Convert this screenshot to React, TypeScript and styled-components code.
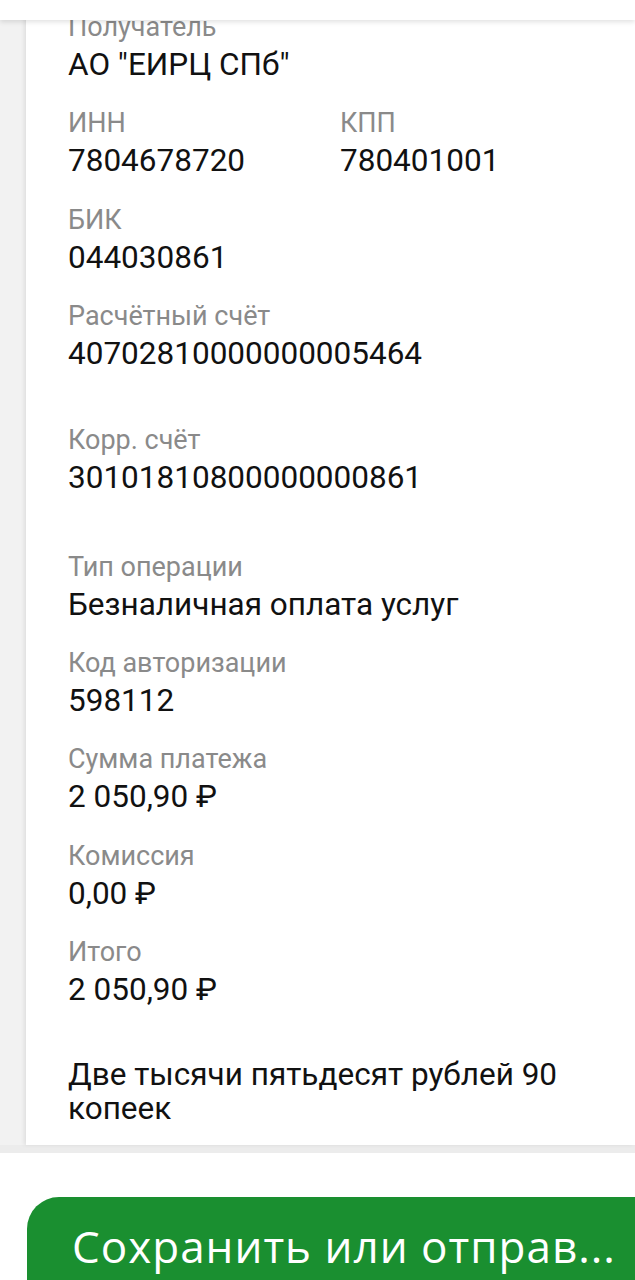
import React from "react";
import styled, { createGlobalStyle } from "styled-components";

const Global = createGlobalStyle`
  html, body { margin: 0; padding: 0; background: #ffffff; }
  body { font-family: Roboto, "Noto Sans", Arial, sans-serif; overflow: hidden; }
`;

const Screen = styled.div`
  position: relative;
  width: 635px;
  height: 1280px;
  overflow: hidden;
  background: #ffffff;
  display: flex;
  flex-direction: column;
`;

const TopBar = styled.div`
  position: absolute;
  top: 0;
  left: 0;
  right: 0;
  height: 20px;
  background: #ffffff;
  box-shadow: 0 2px 5px rgba(0, 0, 0, 0.12);
  z-index: 2;
`;

const Body = styled.div`
  display: flex;
  background: #f2f2f2;
  box-shadow: 0 4px 4px rgba(0, 0, 0, 0.08);
  border-bottom: 8px solid #ececec;
`;

const SideStrip = styled.div`
  width: 26px;
  flex: none;
  background: #f2f2f2;
`;

const Card = styled.div`
  flex: 1;
  background: #ffffff;
  box-shadow: -2px 0 4px rgba(0, 0, 0, 0.08);
  padding: 8px 0 19px 42px;
  display: flex;
  flex-direction: column;
`;

const Field = styled.div<{ $gap?: number }>`
  display: flex;
  flex-direction: column;
  margin-bottom: ${(p) => p.$gap ?? 20.3}px;
`;

const Row = styled.div`
  display: grid;
  grid-template-columns: 272px 1fr;
`;

const Label = styled.div`
  font-family: Roboto, "Noto Sans", sans-serif;
  font-size: 27px;
  line-height: 38px;
  color: #8a8a8a;
  font-weight: 400;
`;

const Value = styled.div`
  font-family: Roboto, "Noto Sans", sans-serif;
  font-size: 31.5px;
  line-height: 38px;
  color: #111111;
`;

const Words = styled.div`
  font-family: Roboto, "Noto Sans", sans-serif;
  font-size: 31.5px;
  line-height: 34px;
  color: #111111;
  width: 500px;
`;

const ButtonArea = styled.div`
  flex: 1;
  padding: 44px 0 0 27px;
  background: #ffffff;
`;

const GreenButton = styled.button`
  display: block;
  width: 640px;
  border: none;
  border-radius: 32px 0 0 0;
  background: #1a8f30;
  color: #ffffff;
  font-family: "Open Sans", "Noto Sans", sans-serif;
  font-size: 44px;
  letter-spacing: 1px;
  line-height: 56px;
  text-align: left;
  padding: 21px 0 100px 45px;
  white-space: nowrap;
  cursor: pointer;
`;

type F = { label: string; value: string; gap?: number };

const fields: F[] = [
  { label: "БИК", value: "044030861" },
  { label: "Расчётный счёт", value: "40702810000000005464", gap: 48 },
  { label: "Корр. счёт", value: "30101810800000000861", gap: 51 },
  { label: "Тип операции", value: "Безналичная оплата услуг" },
  { label: "Код авторизации", value: "598112" },
  { label: "Сумма платежа", value: "2 050,90 ₽" },
  { label: "Комиссия", value: "0,00 ₽" },
  { label: "Итого", value: "2 050,90 ₽", gap: 49 },
];

export default function App() {
  return (
    <Screen>
      <Global />
      <TopBar />
      <Body>
        <SideStrip />
        <Card>
          <Field>
            <Label>Получатель</Label>
            <Value>АО "ЕИРЦ СПб"</Value>
          </Field>
          <Row>
            <Field>
              <Label>ИНН</Label>
              <Value>7804678720</Value>
            </Field>
            <Field>
              <Label>КПП</Label>
              <Value>780401001</Value>
            </Field>
          </Row>
          {fields.map((f) => (
            <Field key={f.label} $gap={f.gap}>
              <Label>{f.label}</Label>
              <Value>{f.value}</Value>
            </Field>
          ))}
          <Words>Две тысячи пятьдесят рублей 90 копеек</Words>
        </Card>
      </Body>
      <ButtonArea>
        <GreenButton>Сохранить или отправ...</GreenButton>
      </ButtonArea>
    </Screen>
  );
}
